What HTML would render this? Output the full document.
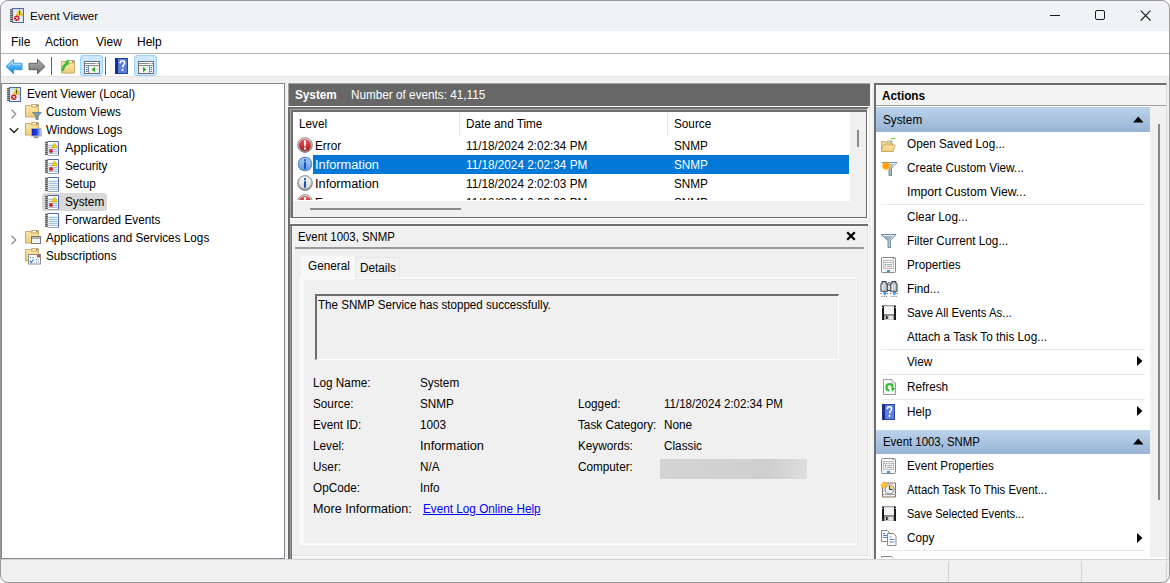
<!DOCTYPE html>
<html><head><meta charset="utf-8">
<style>
*{margin:0;padding:0;box-sizing:border-box}
html,body{width:1170px;height:583px;overflow:hidden;background:#fff;font-family:"Liberation Sans",sans-serif;font-size:12px;color:#000}
.a{position:absolute;white-space:nowrap;line-height:14px;transform-origin:0 0;transform:scaleX(.979)}
.b{position:absolute}
#win{position:absolute;left:0;top:0;width:1170px;height:583px;background:#f0f0f0;border-radius:8px;overflow:hidden}
#frame{position:absolute;left:0;top:0;width:1170px;height:583px;border:1px solid #9a9a9a;border-radius:8px}
svg{position:absolute;overflow:visible}
</style></head><body>
<svg width="0" height="0" style="position:absolute">
<defs>
 <linearGradient id="gFold" x1="0" y1="0" x2="0" y2="1"><stop offset="0" stop-color="#fbe6a8"/><stop offset="1" stop-color="#efcd7a"/></linearGradient>
 <linearGradient id="gRed" x1="0" y1="0" x2="0" y2="1"><stop offset="0" stop-color="#e85a5a"/><stop offset="1" stop-color="#b01515"/></linearGradient>
 <linearGradient id="gRing" x1="0" y1="0" x2="0" y2="1"><stop offset="0" stop-color="#e8e8e8"/><stop offset="1" stop-color="#8a8a8a"/></linearGradient>
 <linearGradient id="gInfoW" x1="0" y1="0" x2="0" y2="1"><stop offset="0" stop-color="#ffffff"/><stop offset="1" stop-color="#d0d0d0"/></linearGradient>
 <linearGradient id="gInfoB" x1="0" y1="0" x2="0" y2="1"><stop offset="0" stop-color="#a9cdf0"/><stop offset="1" stop-color="#5d9ad8"/></linearGradient>
 <linearGradient id="gBack" x1="0" y1="0" x2="0" y2="1"><stop offset="0" stop-color="#9adcff"/><stop offset="0.6" stop-color="#39a8f0"/><stop offset="1" stop-color="#0a7fd8"/></linearGradient>
 <linearGradient id="gFwd" x1="0" y1="0" x2="0" y2="1"><stop offset="0" stop-color="#b8b8b8"/><stop offset="1" stop-color="#6a6a6a"/></linearGradient>
 <linearGradient id="gHdr" x1="0" y1="0" x2="0" y2="1"><stop offset="0" stop-color="#c4d8ee"/><stop offset="1" stop-color="#9bb9d9"/></linearGradient>
 <symbol id="evlog" viewBox="0 0 16 16">
  <rect x="3.5" y="1.5" width="11" height="14" fill="#cfdff2" stroke="#4d6aa6"/>
  <path d="M5 4.5h8M5 6.5h8M5 8.5h8M5 10.5h8M5 12.5h8M5 14h8" stroke="#fff" stroke-width="1"/>
  <rect x="1.2" y="2" width="2.6" height="13" fill="#9a9a9a"/>
  <path d="M1.2 2.5h2.6M1.2 4.5h2.6M1.2 6.5h2.6M1.2 8.5h2.6M1.2 10.5h2.6M1.2 12.5h2.6M1.2 14.5h2.6" stroke="#505050" stroke-width="0.9"/>
  <path d="M10.5 2.2L13.8 8.3H7.2Z" fill="#f2d21a" stroke="#c9a400" stroke-width="0.6"/>
  <path d="M10.5 4.3v2.2M10.5 7.1v0.7" stroke="#222" stroke-width="1"/>
  <circle cx="7.8" cy="11.3" r="2.7" fill="#d01c1c"/>
  <path d="M6.7 10.2l2.2 2.2M8.9 10.2l-2.2 2.2" stroke="#fff" stroke-width="1"/>
 </symbol>
 <symbol id="log" viewBox="0 0 16 16">
  <rect x="3.5" y="1" width="11" height="14.5" fill="#fff"/>
  <path d="M3.5 1.5h11v14" fill="none" stroke="#4d6ab0" stroke-width="1"/>
  <path d="M3.5 15.5h11" stroke="#9aa4b8" stroke-width="1"/>
  <path d="M4.5 5.3h9M4.5 7.3h9M4.5 9.3h9M4.5 11.3h9M4.5 13.3h9" stroke="#8fb0d8" stroke-width="1"/>
  <rect x="1.2" y="1.5" width="2.6" height="13.5" fill="#9a9a9a"/>
  <path d="M1.2 2.5h2.6M1.2 4.5h2.6M1.2 6.5h2.6M1.2 8.5h2.6M1.2 10.5h2.6M1.2 12.5h2.6M1.2 14.5h2.6" stroke="#505050" stroke-width="0.9"/>
 </symbol>
 <symbol id="logw" viewBox="0 0 16 16">
  <use href="#log"/>
  <path d="M10.5 2.8L13.2 7.8H7.8Z" fill="#f3d20a" stroke="#d2ab00" stroke-width="0.6" stroke-linejoin="round"/>
  <circle cx="7" cy="11" r="2" fill="#d42a2a"/>
 </symbol>
 <symbol id="folder" viewBox="0 0 16 16">
  <path d="M7.5 3.5v-2h7v3" fill="#f3d58c" stroke="#c9a35a" stroke-width="0.9"/>
  <rect x="9" y="2" width="4.8" height="1.3" fill="#fff"/>
  <rect x="12" y="2" width="1.6" height="1.3" fill="#2b7de0"/>
  <path d="M1.5 2.5h5l1 1.5h7v10h-13z" fill="url(#gFold)" stroke="#c9a35a" stroke-width="0.9"/>
 </symbol>
 <symbol id="errI" viewBox="0 0 16 16">
  <circle cx="8" cy="8" r="7.4" fill="url(#gRing)" stroke="#6f6f6f" stroke-width="0.7"/>
  <circle cx="8" cy="8" r="5.9" fill="url(#gRed)"/>
  <path d="M6.9 3.2h2.2l-0.4 6.2h-1.4z" fill="#fff"/>
  <rect x="6.9" y="10.6" width="2.2" height="2" fill="#fff"/>
 </symbol>
 <symbol id="infoW" viewBox="0 0 16 16">
  <circle cx="8" cy="8" r="7.4" fill="url(#gRing)" stroke="#6f6f6f" stroke-width="0.7"/>
  <circle cx="8" cy="8" r="5.9" fill="url(#gInfoW)"/>
  <rect x="7" y="3.2" width="2" height="2" fill="#1b4fc4"/>
  <rect x="7" y="6.2" width="2" height="6.6" fill="#1b4fc4"/>
 </symbol>
 <symbol id="infoB" viewBox="0 0 16 16">
  <circle cx="8" cy="8" r="7.3" fill="#4f86c6"/>
  <circle cx="8" cy="8" r="6.3" fill="url(#gInfoB)"/>
  <rect x="7" y="3.2" width="2" height="2" fill="#1b4fc4"/>
  <rect x="7" y="6.2" width="2" height="6.6" fill="#1b4fc4"/>
 </symbol>
 <symbol id="help" viewBox="0 0 13 16">
  <rect x="0" y="0" width="13" height="16" fill="#2844a8"/>
  <rect x="3" y="1" width="9" height="14" fill="#5a7fd8"/>
  <rect x="0" y="0" width="3" height="16" fill="#1a2f8a"/>
  <path d="M5.2 5.2c0-1.6 1-2.4 2.2-2.4s2.2 0.8 2.2 2.2c0 1.6-1.8 1.8-1.8 3.6v0.8" fill="none" stroke="#fff" stroke-width="1.6"/>
  <rect x="6.6" y="11" width="1.8" height="1.8" fill="#fff"/>
 </symbol>
 <symbol id="pane" viewBox="0 0 16 13">
  <rect x="0.5" y="0.5" width="15" height="12" fill="#fff" stroke="#6e6e6e"/>
  <path d="M1 2.5h10.5M1 4.5h14" stroke="#8a8a8a"/>
  <rect x="12.5" y="2" width="1" height="1" fill="#8a8a8a"/><rect x="14" y="2" width="1" height="1" fill="#8a8a8a"/>
  <rect x="5" y="5" width="10" height="7" fill="#f1f1f1"/>
  <path d="M4.5 5v7.5" stroke="#8a8a8a"/>
  <rect x="2" y="6" width="1.6" height="1" fill="#2f6fd0"/><rect x="2" y="8" width="1.6" height="1" fill="#2f6fd0"/><rect x="2" y="10" width="1.6" height="1" fill="#2f6fd0"/>
  <path d="M11 5.8v5.4l-3.4-2.7z" fill="#28b028"/>
 </symbol>
 <symbol id="floppy" viewBox="0 0 16 16">
  <rect x="1" y="0.5" width="14" height="14.5" fill="#1c1c1c"/>
  <rect x="1" y="2" width="0.8" height="1" fill="#fff"/><rect x="14.2" y="2" width="0.8" height="1" fill="#fff"/>
  <rect x="3" y="0.8" width="10" height="8.7" fill="#f4f4f4"/>
  <rect x="3" y="0.5" width="10" height="0.8" fill="#9a9a9a"/>
  <rect x="3.3" y="10.3" width="9.5" height="4.7" fill="#c8c8c8"/>
  <rect x="8" y="10.8" width="4" height="3.5" fill="#e4e4e4"/>
  <rect x="5" y="11" width="1.6" height="3" fill="#1c1c1c"/>
 </symbol>
<symbol id="props" viewBox="0 0 15 16">
  <rect x="0.5" y="0.5" width="14" height="15" rx="1" fill="#f8f8f8" stroke="#8a8a8a"/>
  <path d="M12 1.5h1.5" stroke="#7090c0"/>
  <rect x="2.5" y="3.5" width="10" height="8" fill="#f3f3f3" stroke="#b0b0b0" stroke-width="0.8"/>
  <path d="M2.5 5.5h10" stroke="#b0b0b0" stroke-width="0.8"/>
  <circle cx="4.5" cy="7.5" r="0.7" fill="#1e90ff"/>
  <path d="M6 7.5h5M6 9.5h5" stroke="#999" stroke-width="0.8"/>
  <circle cx="4.5" cy="9.5" r="0.6" fill="#888"/>
  <rect x="6" y="13" width="3" height="2" fill="#1ea0f0"/>
 </symbol>
</defs></svg>
<div id="win">
<div class="b" style="left:0px;top:0px;width:1170px;height:31px;background:#f0f2f6"></div>
<div class="a" style="left:30px;top:9px;font-size:11.6px;transform:none">Event Viewer</div>
<div class="b" style="left:1050px;top:15px;width:10px;height:1px;background:#1a1a1a"></div>
<div class="b" style="left:1095px;top:10px;width:10px;height:10px;border:1.2px solid #1a1a1a;border-radius:2px"></div>
<svg style="left:1140px;top:10px" width="11" height="11"><path d="M0.7 0.7L10.5 10.5M10.5 0.7L0.7 10.5" stroke="#1a1a1a" stroke-width="1.1"/></svg>
<div class="b" style="left:0px;top:31px;width:1170px;height:22px;background:#fff"></div>
<div class="b" style="left:0px;top:53px;width:1170px;height:1px;background:#b4b4b4"></div>
<div class="a" style="left:11px;top:35px;font-size:12px;transform:none">File</div>
<div class="a" style="left:45px;top:35px;font-size:12px;transform:none">Action</div>
<div class="a" style="left:96px;top:35px;font-size:12px;transform:none">View</div>
<div class="a" style="left:137px;top:35px;font-size:12px;transform:none">Help</div>
<div class="b" style="left:0px;top:54px;width:1170px;height:22px;background:#fff"></div>
<div class="b" style="left:0px;top:76px;width:1170px;height:1px;background:#e3e3e3"></div>
<div class="b" style="left:51px;top:57px;width:1px;height:18px;background:#666"></div>
<div class="b" style="left:105px;top:57px;width:1px;height:18px;background:#666"></div>
<div class="b" style="left:80px;top:55px;width:23px;height:21px;background:#cce8ff;border:1px solid #99d1ff;border-radius:3px"></div>
<div class="b" style="left:134px;top:55px;width:23px;height:21px;background:#cce8ff;border:1px solid #99d1ff;border-radius:3px"></div>
<div class="b" style="left:1px;top:83px;width:284px;height:476px;background:#fff;border:1px solid #828790"></div>
<div class="b" style="left:42px;top:193px;width:65px;height:18px;background:#d9d9d9;border-radius:3px"></div>
<div class="a" style="left:65px;top:141px;transform:scaleX(1.055)">Application</div>
<div class="a" style="left:27px;top:87px;">Event Viewer (Local)</div>
<div class="a" style="left:46px;top:105px;">Custom Views</div>
<div class="a" style="left:46px;top:123px;">Windows Logs</div>
<div class="a" style="left:65px;top:159px;">Security</div>
<div class="a" style="left:65px;top:177px;">Setup</div>
<div class="a" style="left:65px;top:195px;">System</div>
<div class="a" style="left:65px;top:213px;">Forwarded Events</div>
<div class="a" style="left:46px;top:231px;">Applications and Services Logs</div>
<div class="a" style="left:46px;top:249px;">Subscriptions</div>
<div class="b" style="left:287px;top:83px;width:1px;height:476px;background:#f8f8f8"></div>
<div class="b" style="left:288px;top:83px;width:582px;height:23px;background:#676767;border-top:1px solid #a4a4a4;border-left:1px solid #a4a4a4"></div>
<div class="a" style="left:295px;top:88px;color:#fff;font-weight:bold">System</div>
<div class="a" style="left:351px;top:88px;color:#fff">Number of events: 41,115</div>
<div class="b" style="left:288px;top:106px;width:582px;height:1px;background:#fafafa"></div>
<div class="b" style="left:288px;top:107px;width:581px;height:111px;border:2px solid #6d6d6d;border-right:2px solid #fafafa;border-bottom:none;background:#f0f0f0"></div>
<div class="b" style="left:290px;top:109px;width:577px;height:109px;border:1px solid #a8a8a8;border-right:none;border-bottom:none"></div>
<div class="b" style="left:291px;top:110px;width:576px;height:108px;border:2px solid #6d6d6d;border-right:1px solid #6d6d6d;border-bottom:1px solid #6d6d6d;background:#f0f0f0"></div>
<div class="b" style="left:293px;top:112px;width:557px;height:89px;background:#fff"></div>
<div class="b" style="left:459px;top:113px;width:1px;height:22px;background:#e5e5e5"></div>
<div class="b" style="left:667px;top:113px;width:1px;height:22px;background:#e5e5e5"></div>
<div class="a" style="left:299px;top:117px;">Level</div>
<div class="a" style="left:466px;top:117px;">Date and Time</div>
<div class="a" style="left:674px;top:117px;">Source</div>
<div class="b" style="left:313px;top:155px;width:536px;height:19px;background:#0078d7"></div>
<div class="a" style="left:315px;top:139px;">Error</div>
<div class="a" style="left:466px;top:139px;">11/18/2024 2:02:34 PM</div>
<div class="a" style="left:674px;top:139px;">SNMP</div>
<div class="a" style="left:315px;top:158px;color:#fff;transform:scaleX(1.065)">Information</div>
<div class="a" style="left:466px;top:158px;color:#fff">11/18/2024 2:02:34 PM</div>
<div class="a" style="left:674px;top:158px;color:#fff">SNMP</div>
<div class="a" style="left:315px;top:177px;transform:scaleX(1.065)">Information</div>
<div class="a" style="left:466px;top:177px;">11/18/2024 2:02:03 PM</div>
<div class="a" style="left:674px;top:177px;">SNMP</div>
<div class="b" style="left:310px;top:208px;width:151px;height:2px;background:#8a8a8a"></div>
<div class="b" style="left:857px;top:130px;width:2px;height:17px;background:#8a8a8a"></div>
<div class="b" style="left:288px;top:107px;width:2px;height:452px;background:#6d6d6d"></div>
<div class="b" style="left:290px;top:218px;width:578px;height:2px;background:#fbfbfb"></div>
<div class="b" style="left:290px;top:223px;width:578px;height:1px;background:#fbfbfb"></div>
<div class="b" style="left:288px;top:224px;width:580px;height:335px;border-top:2px solid #6d6d6d;border-left:4px solid #6d6d6d;background:#f0f0f0"></div>
<div class="b" style="left:290px;top:226px;width:1px;height:333px;background:#a0a0a0"></div>
<div class="b" style="left:292px;top:226px;width:576px;height:1px;background:#fbfbfb"></div>
<div class="b" style="left:292px;top:226px;width:1px;height:333px;background:#fbfbfb"></div>
<div class="b" style="left:868px;top:223px;width:1px;height:336px;background:#fbfbfb"></div>
<div class="b" style="left:871px;top:83px;width:1px;height:476px;background:#fbfbfb"></div>
<div class="b" style="left:292px;top:556px;width:576px;height:1px;background:#fdfdfd"></div>
<div class="b" style="left:867px;top:226px;width:1px;height:330px;background:#e2e2e2"></div>
<div class="b" style="left:292px;top:555px;width:575px;height:1px;background:#e2e2e2"></div>
<div class="a" style="left:298px;top:230px;transform:scaleX(.95)">Event 1003, SNMP</div>
<svg style="left:846px;top:231px" width="10" height="10"><path d="M1.2 1.2L8.8 8.8M8.8 1.2L1.2 8.8" stroke="#000" stroke-width="2.2"/></svg>
<div class="b" style="left:295px;top:247px;width:569px;height:2px;background:#999"></div>
<div class="b" style="left:300px;top:277px;width:558px;height:270px;border-top:1px solid #fdfdfd;border-left:1px solid #fdfdfd;border-right:1px solid #e6e6e6;border-bottom:1px solid #e6e6e6;background:#f9f9f9"></div>
<div class="b" style="left:304px;top:279px;width:552px;height:264px;background:#f0f0f0;border-top:1px solid #e9e9e9"></div>
<div class="b" style="left:301px;top:256px;width:54px;height:24px;background:#f8f8f8"></div>
<div class="b" style="left:355px;top:257px;width:45px;height:21px;background:#f2f2f2;border:1px solid #e6e6e6;border-bottom:none"></div>
<div class="a" style="left:308px;top:259px;">General</div>
<div class="a" style="left:360px;top:261px;">Details</div>
<div class="b" style="left:315px;top:294px;width:524px;height:66px;border:1px solid #fdfdfd;border-top:2px solid #6d6d6d;border-left:2px solid #6d6d6d"></div>
<div class="a" style="left:318px;top:298px;transform:scaleX(.966)">The SNMP Service has stopped successfully.</div>
<div class="a" style="left:313px;top:376px;">Log Name:</div>
<div class="a" style="left:420px;top:376px;">System</div>
<div class="a" style="left:313px;top:397px;">Source:</div>
<div class="a" style="left:420px;top:397px;">SNMP</div>
<div class="a" style="left:578px;top:397px;">Logged:</div>
<div class="a" style="left:664px;top:397px;transform:scaleX(.96)">11/18/2024 2:02:34 PM</div>
<div class="a" style="left:313px;top:418px;">Event ID:</div>
<div class="a" style="left:420px;top:418px;">1003</div>
<div class="a" style="left:578px;top:418px;">Task Category:</div>
<div class="a" style="left:664px;top:418px;">None</div>
<div class="a" style="left:313px;top:439px;">Level:</div>
<div class="a" style="left:420px;top:439px;transform:scaleX(1.065)">Information</div>
<div class="a" style="left:578px;top:439px;">Keywords:</div>
<div class="a" style="left:664px;top:439px;">Classic</div>
<div class="a" style="left:313px;top:460px;">User:</div>
<div class="a" style="left:420px;top:460px;">N/A</div>
<div class="a" style="left:578px;top:460px;">Computer:</div>
<div class="a" style="left:313px;top:481px;">OpCode:</div>
<div class="a" style="left:420px;top:481px;">Info</div>
<div class="b" style="left:660px;top:459px;width:147px;height:20px;background:linear-gradient(90deg,#d4d4d4,#cfcfcf 75%,#dedede)"></div>
<div class="a" style="left:313px;top:502px;transform:scaleX(1.05)">More Information:</div>
<div class="a" style="left:423px;top:502px;color:#0000ff;text-decoration:underline">Event Log Online Help</div>
<div class="b" style="left:874px;top:83px;width:293px;height:476px;background:#fff;border-top:2px solid #6d6d6d;border-left:2px solid #6d6d6d;border-right:1px solid #d9d9d9"></div>
<div class="b" style="left:876px;top:85px;width:290px;height:20px;background:#f3f3f3"></div>
<div class="b" style="left:876px;top:105px;width:290px;height:1px;background:#a0a0a0"></div>
<div class="a" style="left:882px;top:89px;font-weight:bold">Actions</div>
<div class="b" style="left:1150px;top:106px;width:16px;height:451px;background:#f0f0f0"></div>
<div class="b" style="left:876px;top:107px;width:274px;height:25px;background:linear-gradient(#bcd3eb,#97b4d4)"></div>
<div class="a" style="left:883px;top:113px;">System</div>
<svg style="left:1133px;top:116px" width="11" height="7"><path d="M0 6.5L5.25 0.5L10.5 6.5Z" fill="#000"/></svg>
<div class="b" style="left:1158px;top:124px;width:2px;height:376px;background:#858585"></div>
<div class="a" style="left:907px;top:137px;">Open Saved Log...</div>
<div class="a" style="left:907px;top:161px;">Create Custom View...</div>
<div class="a" style="left:907px;top:185px;transform:scaleX(1.016)">Import Custom View...</div>
<div class="a" style="left:907px;top:210px;">Clear Log...</div>
<div class="a" style="left:907px;top:234px;">Filter Current Log...</div>
<div class="a" style="left:907px;top:258px;">Properties</div>
<div class="a" style="left:907px;top:282px;">Find...</div>
<div class="a" style="left:907px;top:306px;transform:scaleX(0.952)">Save All Events As...</div>
<div class="a" style="left:907px;top:330px;">Attach a Task To this Log...</div>
<div class="a" style="left:907px;top:355px;">View</div>
<div class="a" style="left:907px;top:380px;">Refresh</div>
<div class="a" style="left:907px;top:405px;">Help</div>
<div class="b" style="left:881px;top:204px;width:264px;height:1px;background:#e8e8e8"></div>
<div class="b" style="left:881px;top:349px;width:264px;height:1px;background:#e8e8e8"></div>
<div class="b" style="left:881px;top:374px;width:264px;height:1px;background:#e8e8e8"></div>
<div class="b" style="left:881px;top:399px;width:264px;height:1px;background:#e8e8e8"></div>
<div class="b" style="left:881px;top:550px;width:264px;height:1px;background:#e8e8e8"></div>
<svg style="left:1137px;top:356px" width="6" height="10"><path d="M0 0L5.5 5L0 10Z" fill="#000"/></svg>
<svg style="left:1137px;top:406px" width="6" height="10"><path d="M0 0L5.5 5L0 10Z" fill="#000"/></svg>
<svg style="left:1137px;top:533px" width="6" height="10"><path d="M0 0L5.5 5L0 10Z" fill="#000"/></svg>
<div class="b" style="left:876px;top:430px;width:274px;height:24px;background:linear-gradient(#bcd3eb,#97b4d4)"></div>
<div class="a" style="left:883px;top:435px;transform:scaleX(.95)">Event 1003, SNMP</div>
<svg style="left:1133px;top:438px" width="11" height="7"><path d="M0 6.5L5.25 0.5L10.5 6.5Z" fill="#000"/></svg>
<div class="a" style="left:907px;top:459px;">Event Properties</div>
<div class="a" style="left:907px;top:483px;transform:scaleX(.951)">Attach Task To This Event...</div>
<div class="a" style="left:907px;top:507px;transform:scaleX(.92)">Save Selected Events...</div>
<div class="a" style="left:907px;top:531px;">Copy</div>
<!-- ICONS -->
 <svg style="left:9px;top:7px" width="16" height="16"><use href="#evlog"/></svg>
 <!-- toolbar -->
 <svg style="left:5px;top:58px" width="18" height="17" viewBox="0 0 18 17"><path d="M1 8.5L8.5 1.2V5.3H17V11.7H8.5V15.8Z" fill="url(#gBack)" stroke="#3c9be6" stroke-width="1" stroke-linejoin="round"/><path d="M3 8.5L7.5 4.2V6.3H16" fill="none" stroke="#d8f0ff" stroke-width="0.8" opacity="0.8"/></svg>
 <svg style="left:28px;top:58px" width="18" height="17" viewBox="0 0 18 17"><path d="M17 8.5L9.5 1.2V5.3H1V11.7H9.5V15.8Z" fill="url(#gFwd)" stroke="#555" stroke-width="0.9" stroke-linejoin="round"/></svg>
 <svg style="left:60px;top:59px" width="16" height="16" viewBox="0 0 16 16"><use href="#folder"/><path d="M2.8 11C3.2 8 4.5 6 6.8 4.6" stroke="#3cbc3c" stroke-width="2.6" fill="none" stroke-linecap="round"/><path d="M4.6 2.6L9.2 0.6L8.4 6.2z" fill="#3cbc3c"/></svg>
 <svg style="left:84px;top:61px" width="16" height="13"><use href="#pane"/></svg>
 <svg style="left:115px;top:58px" width="13" height="16"><use href="#help"/></svg>
 <svg style="left:138px;top:61px" width="16" height="13" viewBox="0 0 16 13"><rect x="0.5" y="0.5" width="15" height="12" fill="#fff" stroke="#6e6e6e"/><path d="M1 2.5h10.5M1 4.5h14" stroke="#8a8a8a"/><rect x="12.5" y="2" width="1" height="1" fill="#8a8a8a"/><rect x="14" y="2" width="1" height="1" fill="#8a8a8a"/><rect x="1" y="5" width="10" height="7" fill="#f1f1f1"/><path d="M11.5 5v7.5" stroke="#8a8a8a"/><rect x="12.5" y="6" width="1.6" height="1" fill="#2f6fd0"/><rect x="12.5" y="8" width="1.6" height="1" fill="#2f6fd0"/><rect x="12.5" y="10" width="1.6" height="1" fill="#2f6fd0"/><path d="M5 5.8v5.4l3.4-2.7z" fill="#28b028"/></svg>
 <!-- tree icons -->
 <svg style="left:6px;top:86px" width="16" height="16"><use href="#evlog"/></svg>
 <svg style="left:10px;top:109px" width="8" height="10" viewBox="0 0 8 10"><path d="M1.5 0.8L5.8 5L1.5 9.2" fill="none" stroke="#8a8a8a" stroke-width="1.2"/></svg>
 <svg style="left:9px;top:127px" width="10" height="7" viewBox="0 0 10 7"><path d="M0.8 1.2L5 5.5L9.2 1.2" fill="none" stroke="#222" stroke-width="1.3"/></svg>
 <svg style="left:10px;top:235px" width="8" height="10" viewBox="0 0 8 10"><path d="M1.5 0.8L5.8 5L1.5 9.2" fill="none" stroke="#8a8a8a" stroke-width="1.2"/></svg>
 <svg style="left:24px;top:103px" width="16" height="16"><use href="#folder"/></svg>
 <svg style="left:32px;top:112px" width="10" height="8" viewBox="0 0 10 8"><path d="M0.5 0.5h9l-3.3 3.5v3.5h-2.4v-3.5z" fill="#7f9db8" stroke="#506a80" stroke-width="0.6"/></svg>
 <svg style="left:24px;top:121px" width="16" height="16"><use href="#folder"/></svg>
 <svg style="left:31px;top:128px" width="11" height="11" viewBox="0 0 11 11"><defs><linearGradient id="gMon" x1="0" y1="0" x2="1" y2="0"><stop offset="0" stop-color="#0818c8"/><stop offset="0.55" stop-color="#2040e0"/><stop offset="1" stop-color="#c8d6ff"/></linearGradient></defs><rect x="0.5" y="0.5" width="9.5" height="7.5" fill="url(#gMon)" stroke="#a8a8a8"/><rect x="3" y="8.5" width="4.5" height="1.6" fill="#8a8a8a"/></svg>
 <svg style="left:44px;top:140px" width="16" height="16"><use href="#logw"/></svg>
 <svg style="left:44px;top:158px" width="16" height="16"><use href="#logw"/></svg>
 <svg style="left:44px;top:176px" width="16" height="16"><use href="#log"/></svg>
 <svg style="left:44px;top:194px" width="16" height="16"><use href="#logw"/></svg>
 <svg style="left:44px;top:212px" width="16" height="16"><use href="#log"/></svg>
 <svg style="left:24px;top:229px" width="16" height="16"><use href="#folder"/></svg>
 <svg style="left:31px;top:236px" width="10" height="8" viewBox="0 0 10 8"><rect x="0.5" y="0.5" width="9" height="7" fill="#f2f2f2" stroke="#777"/><path d="M1 2h8" stroke="#777"/></svg>
 <svg style="left:24px;top:247px" width="16" height="16"><use href="#folder"/></svg>
 <svg style="left:28px;top:254px" width="13" height="10" viewBox="0 0 13 10"><rect x="0.5" y="0.5" width="12" height="9.5" fill="#fff" stroke="#8c8c8c"/><rect x="9" y="1" width="3" height="2.5" fill="#f03a3a"/><rect x="2" y="3" width="1" height="1" fill="#3a7ad0"/><rect x="4.3" y="3" width="1.6" height="1" fill="#8a8aa0"/><path d="M2 6.6L3.2 8.6L5.6 5.2" fill="none" stroke="#2a6ad0" stroke-width="1.1"/><rect x="8" y="5.2" width="1" height="1" fill="#3a7ad0"/><rect x="10" y="5.2" width="1" height="1" fill="#8a8aa0"/><rect x="8" y="7.5" width="1" height="1" fill="#3a7ad0"/><rect x="10" y="7.5" width="1" height="1" fill="#8a8aa0"/></svg>
 <!-- list icons -->
 <svg style="left:297px;top:137px" width="16" height="16"><use href="#errI"/></svg>
 <svg style="left:297px;top:156px" width="16" height="16"><use href="#infoB"/></svg>
 <svg style="left:297px;top:175px" width="16" height="16"><use href="#infoW"/></svg>
 <div class="b" style="left:297px;top:194px;width:16px;height:6px;overflow:hidden"><svg style="left:0;top:0" width="16" height="16"><use href="#errI"/></svg></div>
 <div class="b" style="left:315px;top:196px;width:540px;height:4px;overflow:hidden"><div class="a" style="left:0;top:0">Error</div><div class="a" style="left:151px;top:0">11/18/2024 2:02:03 PM</div><div class="a" style="left:359px;top:0">SNMP</div></div>
 
 <!-- action icons -->
 <svg style="left:880px;top:137px" width="16" height="16" viewBox="0 0 16 16">
  <path d="M11 1.5h4" stroke="#3ccf3c" stroke-width="1"/>
  <path d="M7.5 6v-2.2h4.5v2.5" fill="#f4d98f" stroke="#c4a05a" stroke-width="0.7"/>
  <rect x="8.3" y="4.5" width="3" height="1.2" fill="#fff"/>
  <rect x="9.6" y="4.5" width="1.6" height="1.2" fill="#3b8be0"/>
  <path d="M1.5 4.5h4l1 1.5h6v8h-11z" fill="#f4d98f" stroke="#c4a05a" stroke-width="0.8"/>
  <path d="M1.2 14.5l2-6.5h12l-2 6.5z" fill="url(#gFold)" stroke="#c4a05a" stroke-width="0.8"/>
 </svg>
 <svg style="left:881px;top:161px" width="17" height="16" viewBox="0 0 17 16">
  <path d="M1 1.5h15l-5.5 6v7h-2.5v-7z" fill="#a9bccb" stroke="#5e7487" stroke-width="0.8"/>
  <path d="M9 2.5h5.5l-3.5 4" fill="none" stroke="#e8f0f6" stroke-width="1"/>
  <circle cx="5" cy="5" r="3.6" fill="#ffad0a"/>
  <path d="M5 0v10M0 5h10M1.5 1.5l7 7M8.5 1.5l-7 7" stroke="#ffc640" stroke-width="0.9"/>
  <circle cx="5" cy="5" r="2.8" fill="#ff9d00"/>
 </svg>
 <svg style="left:880px;top:233px" width="17" height="16" viewBox="0 0 17 16">
  <path d="M1 1.5h15l-5.5 6v7h-2.5v-7z" fill="#9fb3c3" stroke="#5e7487" stroke-width="0.8"/>
  <path d="M3 2.5h11l-3.5 4" fill="none" stroke="#e8f0f6" stroke-width="1"/>
  <path d="M9.3 8v6" stroke="#d6e2ea" stroke-width="0.8"/>
 </svg>
 <svg style="left:881px;top:257px" width="15" height="16"><use href="#props"/></svg>
 <svg style="left:881px;top:458px" width="15" height="16"><use href="#props"/></svg>
 <svg style="left:880px;top:280px" width="18" height="17" viewBox="0 0 18 17">
  <path d="M7 4h4.5v6.5H7z" fill="#dcdfe2" stroke="#3b4049" stroke-width="1"/>
  <circle cx="9.25" cy="3.6" r="1.3" fill="#eee" stroke="#3b4049" stroke-width="0.8"/>
  <path d="M2.2 1.6h3.8v1.5l1.2 1.2v7H1v-7l1.2-1.2z" fill="#c9cdd2" stroke="#3b4049" stroke-width="1.1"/>
  <path d="M12 1.6h3.8v1.5l1.2 1.2v7H10.8v-7l1.2-1.2z" fill="#c9cdd2" stroke="#3b4049" stroke-width="1.1"/>
  <path d="M2.5 4.5v6M12.3 4.5v6" stroke="#f2f4f6" stroke-width="1.2"/>
  <path d="M3 12h3.6l-1 3h-1.6z" fill="#2b98ee"/>
  <path d="M12.6 12h3.6l-1 3h-1.6z" fill="#2b98ee"/>
  <path d="M1 13v1.5M7.3 13v1.5M10.8 13v1.5M17 13v1.5M1.5 16.3h5.5M11.3 16.3h5.5" stroke="#333" stroke-width="0.9" stroke-dasharray="1 1.2"/>
 </svg>
 <svg style="left:881px;top:305px" width="16" height="16"><use href="#floppy"/></svg>
 <svg style="left:881px;top:506px" width="16" height="16"><use href="#floppy"/></svg>
 <svg style="left:882px;top:378px" width="15" height="18" viewBox="0 0 15 18">
  <path d="M1.5 1.5h8.5l3.5 3.5v11.5h-12z" fill="#fafafa" stroke="#9a9a9a" stroke-width="1"/>
  <path d="M10 1.5v3.5h3.5" fill="#eee" stroke="#aaa" stroke-width="0.8"/>
  <path d="M7.4 12.6A3.2 3.2 0 1 1 10.8 9.2" fill="none" stroke="#36c236" stroke-width="2.3"/>
  <path d="M8.8 9.6L13.2 9.9L10.7 13.4z" fill="#22b022"/>
 </svg>
 <svg style="left:882px;top:404px" width="13" height="16"><use href="#help"/></svg>
 <svg style="left:880px;top:481px" width="17" height="17" viewBox="0 0 17 17">
  <path d="M2.5 2h13v14h-13z" fill="#f0f0f0" stroke="#8a7060" stroke-width="1"/>
  <path d="M2.5 13.5h13" stroke="#aaa" stroke-width="1"/>
  <circle cx="9.5" cy="8.5" r="4.5" fill="#e8f2fa" stroke="#777" stroke-width="1"/>
  <path d="M9.5 8.5V4.5A4 4 0 0 1 13.5 8.5z" fill="#f0d878"/>
  <path d="M9.5 5v3.5h3" fill="none" stroke="#333" stroke-width="1"/>
  <circle cx="4" cy="4" r="2.6" fill="#ffb000"/>
  <path d="M4 0v8M0 4h8M1.2 1.2l5.6 5.6M6.8 1.2l-5.6 5.6" stroke="#ffc840" stroke-width="0.9"/>
 </svg>
 <svg style="left:880px;top:529px" width="18" height="17" viewBox="0 0 18 17">
  <path d="M1.5 1.5h6l1.5 1.5v9.5h-7.5z" fill="#fff" stroke="#888" stroke-width="1"/>
  <path d="M3 4.5h2M3 6.5h4M3 8.5h4" stroke="#3a78d0" stroke-width="0.9"/>
  <path d="M7.5 4.5h6l2.5 2.5v9.5h-8.5z" fill="#fff" stroke="#888" stroke-width="1"/>
  <path d="M9.5 8h2M9.5 10.5h5M9.5 13h5" stroke="#3a78d0" stroke-width="0.9"/>
 </svg>
 <div class="b" style="left:880px;top:555px;width:16px;height:3px;overflow:hidden"><svg style="left:0;top:0" width="16" height="16" viewBox="0 0 16 16"><path d="M1.5 1.5h10l2 2v12h-12z" fill="#fff" stroke="#888"/></svg></div>

<div class="b" style="left:0;top:559px;width:1170px;height:1px;background:#d4d4d4"></div>
<div class="b" style="left:0;top:560px;width:1170px;height:23px;background:#f0f0f0"></div>
<div class="b" style="left:948px;top:561px;width:1px;height:21px;background:#d0d0d0"></div>
<div class="b" style="left:1081px;top:561px;width:1px;height:21px;background:#d0d0d0"></div>
<div class="b" style="left:1166px;top:561px;width:1px;height:21px;background:#d0d0d0"></div>
</div>
<div id="frame"></div>
</body></html>
